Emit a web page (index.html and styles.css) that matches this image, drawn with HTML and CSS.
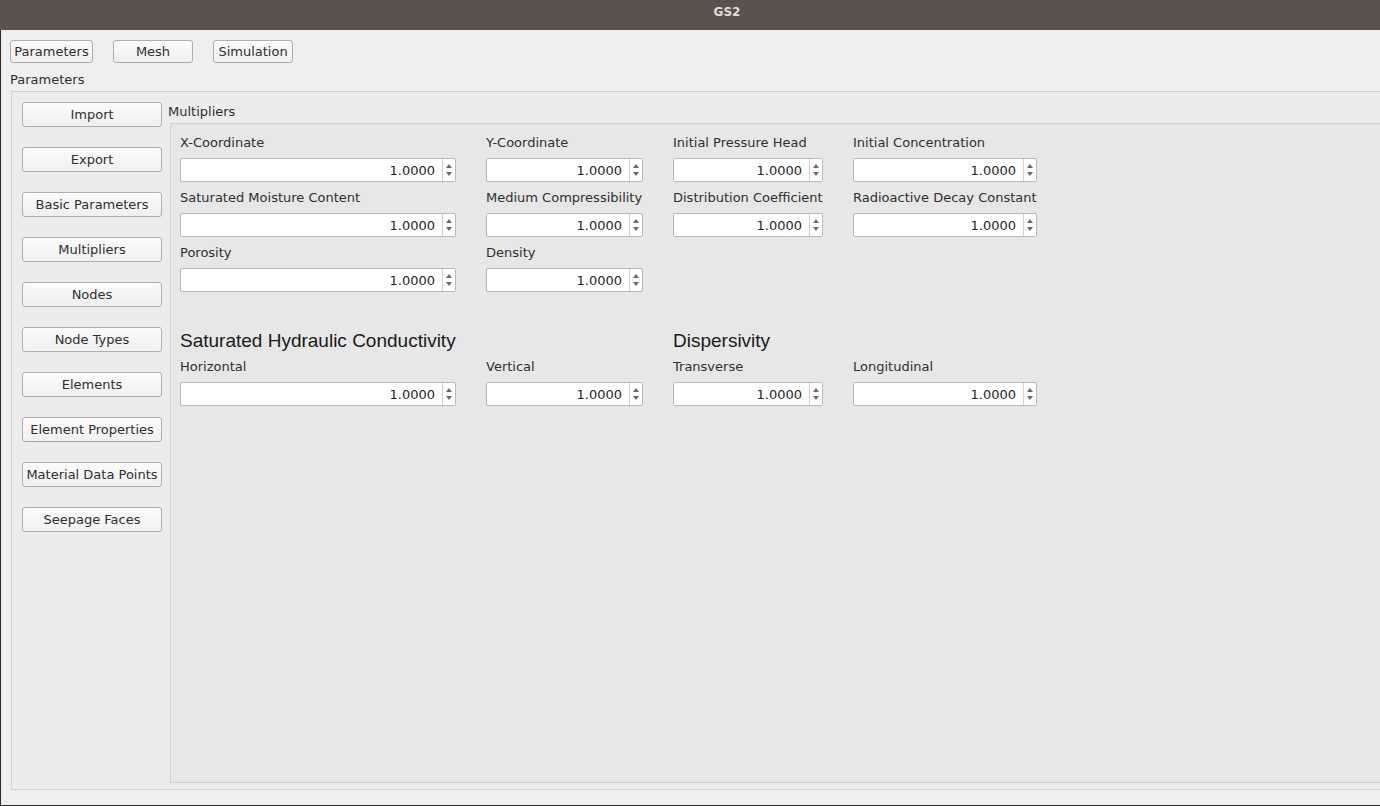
FILE: index.html
```html
<!DOCTYPE html>
<html>
<head>
<meta charset="utf-8">
<title>GS2</title>
<link rel="stylesheet" href="styles.css">
</head>
<body>
<div class="window">
  <div class="titlebar">GS2</div>
  <div class="client">
    <div class="tabs">
      <button class="btn tab">Parameters</button>
      <button class="btn tab">Mesh</button>
      <button class="btn tab">Simulation</button>
    </div>
    <div class="section-label">Parameters</div>
    <div class="group">
      <div class="sidebar">
        <button class="btn side">Import</button>
        <button class="btn side">Export</button>
        <button class="btn side">Basic Parameters</button>
        <button class="btn side">Multipliers</button>
        <button class="btn side">Nodes</button>
        <button class="btn side">Node Types</button>
        <button class="btn side">Elements</button>
        <button class="btn side">Element Properties</button>
        <button class="btn side">Material Data Points</button>
        <button class="btn side">Seepage Faces</button>
      </div>
      <div class="main">
        <div class="main-label">Multipliers</div>
        <div class="frame">
          <div class="grid">
            <div class="field"><div class="lbl">X-Coordinate</div><div class="spin"><span class="val">1.0000</span><span class="arr"><i class="up"></i><i class="dn"></i></span></div></div>
            <div class="field"><div class="lbl">Y-Coordinate</div><div class="spin"><span class="val">1.0000</span><span class="arr"><i class="up"></i><i class="dn"></i></span></div></div>
            <div class="field"><div class="lbl">Initial Pressure Head</div><div class="spin"><span class="val">1.0000</span><span class="arr"><i class="up"></i><i class="dn"></i></span></div></div>
            <div class="field"><div class="lbl">Initial Concentration</div><div class="spin"><span class="val">1.0000</span><span class="arr"><i class="up"></i><i class="dn"></i></span></div></div>

            <div class="field"><div class="lbl">Saturated Moisture Content</div><div class="spin"><span class="val">1.0000</span><span class="arr"><i class="up"></i><i class="dn"></i></span></div></div>
            <div class="field"><div class="lbl">Medium Compressibility</div><div class="spin"><span class="val">1.0000</span><span class="arr"><i class="up"></i><i class="dn"></i></span></div></div>
            <div class="field"><div class="lbl">Distribution Coefficient</div><div class="spin"><span class="val">1.0000</span><span class="arr"><i class="up"></i><i class="dn"></i></span></div></div>
            <div class="field"><div class="lbl">Radioactive Decay Constant</div><div class="spin"><span class="val">1.0000</span><span class="arr"><i class="up"></i><i class="dn"></i></span></div></div>

            <div class="field"><div class="lbl">Porosity</div><div class="spin"><span class="val">1.0000</span><span class="arr"><i class="up"></i><i class="dn"></i></span></div></div>
            <div class="field"><div class="lbl">Density</div><div class="spin"><span class="val">1.0000</span><span class="arr"><i class="up"></i><i class="dn"></i></span></div></div>
            <div class="field empty"></div>
            <div class="field empty"></div>

            <div class="heading span2">Saturated Hydraulic Conductivity</div>
            <div class="heading span2">Dispersivity</div>

            <div class="field"><div class="lbl">Horizontal</div><div class="spin"><span class="val">1.0000</span><span class="arr"><i class="up"></i><i class="dn"></i></span></div></div>
            <div class="field"><div class="lbl">Vertical</div><div class="spin"><span class="val">1.0000</span><span class="arr"><i class="up"></i><i class="dn"></i></span></div></div>
            <div class="field"><div class="lbl">Transverse</div><div class="spin"><span class="val">1.0000</span><span class="arr"><i class="up"></i><i class="dn"></i></span></div></div>
            <div class="field"><div class="lbl">Longitudinal</div><div class="spin"><span class="val">1.0000</span><span class="arr"><i class="up"></i><i class="dn"></i></span></div></div>
          </div>
        </div>
      </div>
    </div>
  </div>
</div>
</body>
</html>
```
FILE: styles.css
```css
* { box-sizing: border-box; }
html, body { margin: 0; padding: 0; }
body {
  width: 1380px;
  height: 806px;
  overflow: hidden;
  background: #2b2b2b;
  font-family: "DejaVu Sans", sans-serif;
  font-size: 13px;
  color: #2f2f2f;
}
.window {
  width: 1380px;
  height: 806px;
  display: flex;
  flex-direction: column;
}
.titlebar {
  height: 30px;
  flex: none;
  background: #59514b;
  color: #dedbd8;
  font-weight: bold;
  font-size: 12px;
  line-height: 24px;
  padding-left: 74px;
  text-align: center;
}
.client {
  flex: 1;
  margin: 0 0 1px 1px;
  background: #efefef;
  padding: 10px 0 15px 9px;
  display: flex;
  flex-direction: column;
  overflow: hidden;
}
.tabs {
  display: flex;
  gap: 20px;
  height: 23px;
}
.btn {
  font-family: "DejaVu Sans", sans-serif;
  font-size: 13px;
  color: #2f2f2f;
  background: linear-gradient(#fbfbfb, #f0f0f0);
  border: 1px solid #aeaeae;
  border-radius: 3px;
  padding: 0;
  margin: 0;
  line-height: 1;
}
.tab { width: 80px; height: 23px; }
.tab:first-child { width: 83px; }
.section-label {
  box-sizing: content-box;
  height: 13px;
  line-height: 15px;
  padding-top: 9px;
}
.group {
  flex: 1;
  margin-left: 1px;
  margin-top: 6px;
  border: 1px solid #d3d3d3;
  border-right: none;
  background: #ececec;
  display: flex;
  padding: 10px 0 6px 10px;
}
.sidebar {
  width: 140px;
  flex: none;
  display: flex;
  flex-direction: column;
  gap: 20px;
}
.side { width: 140px; height: 25px; }
.main {
  flex: 1;
  display: flex;
  flex-direction: column;
  margin-left: 6px;
}
.main-label {
  height: 21px;
  line-height: 20px;
}
.frame {
  flex: 1;
  margin-left: 2px;
  border: 1px solid #d0d0d0;
  border-right: none;
  background: #e7e7e7;
  padding: 11px 0 0 9px;
}
.grid {
  display: grid;
  grid-template-columns: 276px 157px 150px 184px;
  column-gap: 30px;
  align-items: start;
}
.field {
  height: 55px;
}
.lbl {
  height: 23px;
  line-height: 16px;
  white-space: nowrap;
}
.spin {
  height: 24px;
  background: #fff;
  border: 1px solid #b9b9b9;
  border-radius: 2px;
  display: flex;
  align-items: stretch;
}
.val {
  flex: 1;
  text-align: right;
  line-height: 23px;
  padding-right: 7px;
  color: #1f1f1f;
}
.arr {
  width: 13px;
  border-left: 1px solid #d0d0d0;
  display: flex;
  flex-direction: column;
  align-items: center;
  justify-content: center;
  gap: 4px;
}
.arr i {
  width: 0; height: 0;
  border-left: 3.5px solid transparent;
  border-right: 3.5px solid transparent;
}
.arr .up { border-bottom: 4px solid #6a6a6a; }
.arr .dn { border-top: 4px solid #6a6a6a; }
.heading {
  font-family: "Liberation Sans", Arial, sans-serif;
  font-size: 19px;
  color: #1a1a1a;
  line-height: 24px;
  padding-top: 29px;
  height: 59px;
  white-space: nowrap;
}
.span2 { grid-column: span 2; }
```
